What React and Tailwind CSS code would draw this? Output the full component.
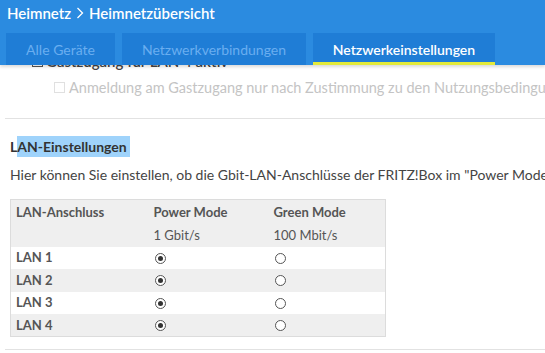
import React from 'react';

const ROWS = [
  { name: 'LAN 1', bg: 'bg-white' },
  { name: 'LAN 2', bg: 'bg-[#efefef]' },
  { name: 'LAN 3', bg: 'bg-white' },
  { name: 'LAN 4', bg: 'bg-[#efefef]' },
];

const Radio = ({ checked }) => (
  <span className="flex h-[11px] w-[11px] items-center justify-center rounded-full border border-[#555] bg-white">
    {checked && <span className="h-[5px] w-[5px] rounded-full bg-[#333]" />}
  </span>
);

const App = () => {
  return (
    <div className="flex h-[353px] w-[545px] flex-col overflow-hidden bg-white font-['Lato','Liberation_Sans',sans-serif] text-[#444]">
      {/* header */}
      <header className="relative z-10 flex h-[65px] shrink-0 flex-col bg-[#2b8be0] shadow-[0_2px_3px_rgba(0,0,0,0.15)]">
        <div className="flex h-[33px] items-center gap-1 px-[7px] pb-[7px] text-[15px] font-semibold text-white">
          <span>Heimnetz</span>
          <svg width="8" height="12" viewBox="0 0 8 12" className="mx-[1px]">
            <path d="M1.5 1 L6.5 6 L1.5 11" fill="none" stroke="white" strokeWidth="1.3" />
          </svg>
          <span>Heimnetzübersicht</span>
        </div>
        <div className="flex h-[32px] gap-[7px] px-[6px] text-[14px]">
          <div className="flex w-[109px] items-center justify-center bg-[#1f7dd6] text-[#6aaef0]">Alle Geräte</div>
          <div className="flex w-[184px] items-center justify-center bg-[#1f7dd6] text-[#6aaef0]">Netzwerkverbindungen</div>
          <div className="flex w-[182px] items-center justify-center border-b-[3px] border-[#e3ea3a] bg-[#1f7dd6] pt-[3px] font-semibold text-white">
            Netzwerkeinstellungen
          </div>
        </div>
      </header>

      {/* content */}
      <div className="flex flex-col overflow-hidden">
        <div className="-mt-[15px] flex items-center gap-[3px] pl-[32px] text-[15px] font-semibold text-[#444]">
          <span className="h-[11px] w-[11px] border border-[#555] bg-white" />
          <span>Gastzugang für LAN 4 aktiv</span>
        </div>
        <div className="mt-[4px] flex items-center gap-[4px] whitespace-nowrap pl-[54px] text-[14.5px] text-[#c4c4c4]">
          <span className="h-[11px] w-[11px] shrink-0 border border-[#e0e0e0] bg-white" />
          <span>Anmeldung am Gastzugang nur nach Zustimmung zu den Nutzungsbedingungen</span>
        </div>
        <div className="ml-[5px] mt-[20px] h-px bg-[#e2e2e2]" />

        <div className="mt-[17px] pl-[10px] text-[14px] font-bold text-[#333]">
          L<span className="bg-[#9fd3fb] py-[2px] pr-[3px]">AN-Einstellungen</span>
        </div>
        <p className="mt-[7px] whitespace-nowrap pl-[10px] text-[14px] text-[#444]">
          Hier können Sie einstellen, ob die Gbit-LAN-Anschlüsse der FRITZ!Box im "Power Mode" oder im "Green Mode" betrieben werden.
        </p>

        <table className="ml-[10px] mt-[14px] w-[376px] border border-[#dcdcdc] text-[13px]">
          <thead className="bg-[#efefef] text-left text-[#555]">
            <tr className="h-[24px]">
              <th className="w-[143px] pl-[5px] pt-[2px] font-bold">LAN-Anschluss</th>
              <th className="w-[120px] pt-[2px] font-bold">Power Mode</th>
              <th className="pt-[2px] font-bold">Green Mode</th>
            </tr>
            <tr className="h-[23px]">
              <th />
              <th className="font-normal">1 Gbit/s</th>
              <th className="font-normal">100 Mbit/s</th>
            </tr>
          </thead>
          <tbody>
            {ROWS.map((r) => (
              <tr key={r.name} className={`h-[22.5px] ${r.bg}`}>
                <td className="pl-[5px] font-bold text-[#555]">{r.name}</td>
                <td className="pl-[1px] align-middle"><Radio checked /></td>
                <td className="pl-[1px] align-middle"><Radio /></td>
              </tr>
            ))}
          </tbody>
        </table>
        <div className="ml-[5px] mt-[12px] h-px bg-[#e2e2e2]" />
      </div>
    </div>
  );
};

export default App;
